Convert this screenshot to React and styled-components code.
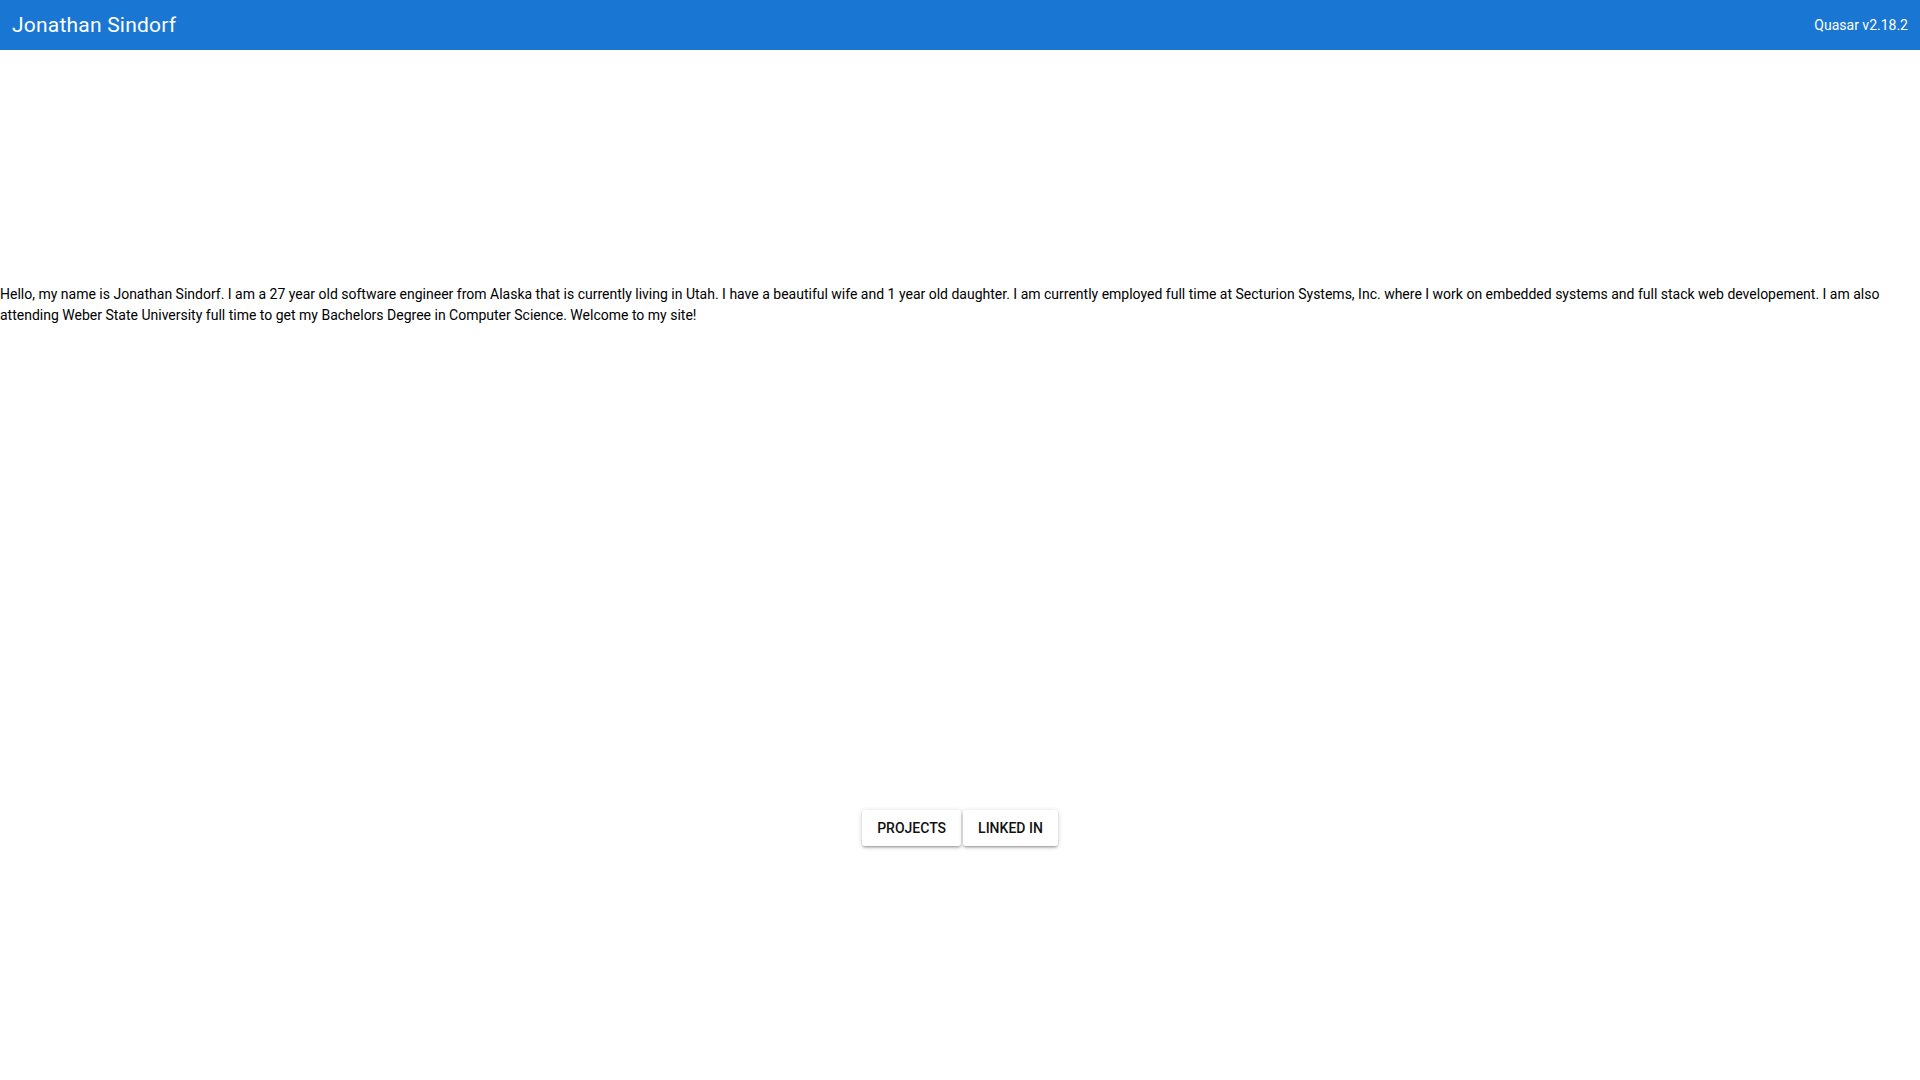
import React from 'react';
import styled, { createGlobalStyle } from 'styled-components';

const GlobalStyle = createGlobalStyle`
  html, body {
    margin: 0;
    padding: 0;
    background: #fff;
  }

  body {
    font-family: Roboto, "Liberation Sans", sans-serif;
    font-size: 14px;
    line-height: 1.5;
    color: #000;
    -webkit-font-smoothing: antialiased;
  }
`;

const Header = styled.header`
  height: 50px;
  background-color: #1976d2;
  color: #fff;
  display: flex;
  align-items: center;
  justify-content: space-between;
  padding: 0 12px;
  box-sizing: border-box;

  .toolbar-title {
    font-size: 21px;
    font-weight: 400;
    letter-spacing: 0.01em;
    line-height: 2rem;
  }

  .toolbar-version {
    font-size: 14px;
  }
`;

const Page = styled.main`
  min-height: calc(100vh - 50px);
  padding-top: 234px;
  box-sizing: border-box;

  .intro {
    margin: 0;
  }
`;

const ButtonRow = styled.div`
  margin-top: 484px;
  display: flex;
  justify-content: center;
  gap: 2px;
`;

const PlainButton = styled.button`
  min-height: 36px;
  padding: 4px 15px;
  border: none;
  border-radius: 3px;
  background: #fff;
  color: #111;
  font-family: Roboto, "Liberation Sans", sans-serif;
  font-size: 14px;
  font-weight: 500;
  line-height: 1.715em;
  text-transform: uppercase;
  cursor: pointer;
  box-shadow: 0 1px 5px rgba(0, 0, 0, 0.2), 0 2px 2px rgba(0, 0, 0, 0.14),
    0 3px 1px -2px rgba(0, 0, 0, 0.12);
`;

const App = () => {
  return (
    <>
      <GlobalStyle />
      <Header>
        <div className="toolbar-title">Jonathan Sindorf</div>
        <div className="toolbar-version">Quasar v2.18.2</div>
      </Header>
      <Page>
        <p className="intro">
          Hello, my name is Jonathan Sindorf. I am a 27 year old software engineer from Alaska that is
          currently living in Utah. I have a beautiful wife and 1 year old daughter. I am currently
          employed full time at Secturion Systems, Inc. where I work on embedded systems and full stack
          web developement. I am also attending Weber State University full time to get my Bachelors
          Degree in Computer Science. Welcome to my site!
        </p>
        <ButtonRow>
          <PlainButton>Projects</PlainButton>
          <PlainButton>Linked In</PlainButton>
        </ButtonRow>
      </Page>
    </>
  );
};

export default App;
